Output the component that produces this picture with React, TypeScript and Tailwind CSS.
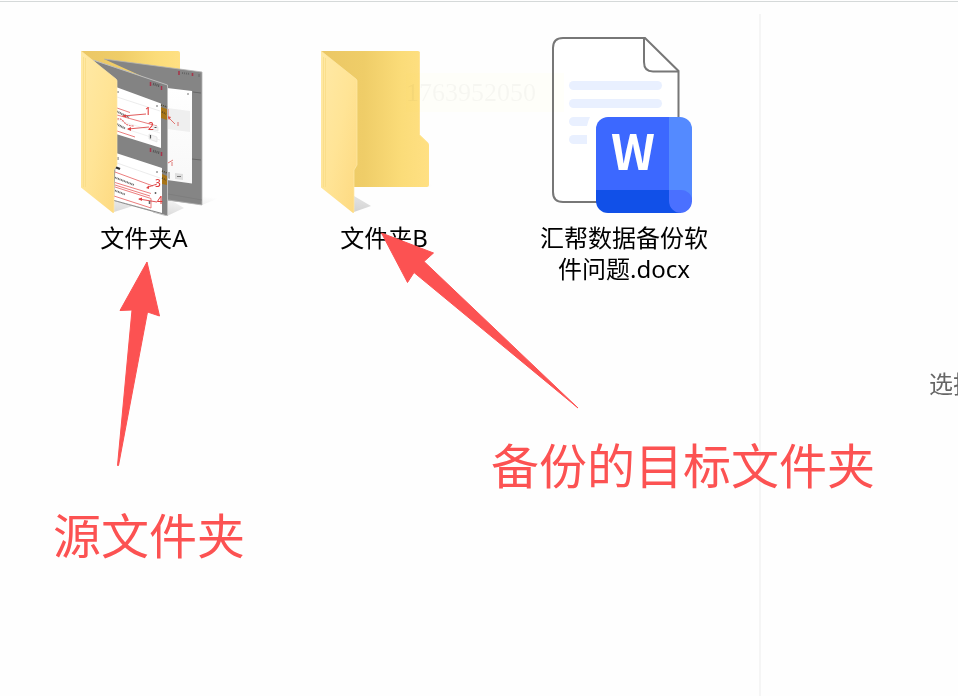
import type { ReactNode } from "react";

function FolderFront({ x }: { x: number }) {
  return (
    <g transform={`translate(${x} 0)`}>
      <path d="M1 51 L36 79 Q37 80 37 81 V165 L34 170 V212.5 L33 213 L1 187.5 Z" fill="url(#folder-front)" />
      <path d="M3.5 57 V187 M5.5 58 V187" stroke="#f9dc86" strokeWidth="0.8" fill="none" />
      <path d="M1 51 L36 79 Q37 80 37 81 V165 L34 170 V212" stroke="#ffeaa9" strokeWidth="0.7" fill="none" />
    </g>
  );
}

function FolderFilledIcon() {
  return (
    <svg viewBox="48 24 192 192" className="h-48 w-48" aria-hidden="true">
      <defs>
        <linearGradient id="folder-front" x1="0" y1="0" x2="1" y2="1">
          <stop offset="0" stopColor="#ffe9a6" />
          <stop offset="0.5" stopColor="#ffe496" />
          <stop offset="1" stopColor="#fdd980" />
        </linearGradient>
        <linearGradient id="folder-back" x1="0" y1="0" x2="1" y2="0">
          <stop offset="0" stopColor="#ebc765" />
          <stop offset="0.4" stopColor="#efcd68" />
          <stop offset="0.75" stopColor="#fbdc79" />
          <stop offset="1" stopColor="#ffe083" />
        </linearGradient>
        <linearGradient id="folder-shadow" x1="0" y1="1" x2="0.5" y2="0">
          <stop offset="0" stopColor="#d2d2d2" />
          <stop offset="1" stopColor="#fefefe" />
        </linearGradient>
        <linearGradient id="page-fade" x1="0" y1="0" x2="0" y2="1">
          <stop offset="0" stopColor="#ffffff" />
          <stop offset="1" stopColor="#f8f8f8" />
        </linearGradient>
      </defs>
      <path d="M81 51 H178 Q180 51 180 53 V90 H81 Z" fill="url(#folder-back)" />
      <path d="M167 216 V198 L184 208 Z M202 205 V192 L219 198 Z M114 212 V198 L133 206 Z" fill="url(#folder-shadow)" />

      {/* rear page */}
      <path d="M104 59 L202 72 V205 L150 198 V80 Z" fill="#858585" />
      <path d="M104 59 L202 72 V205 L168 200" fill="none" stroke="#b5b5b5" strokeWidth="0.8" />
      <path d="M167 88 L192 91 V183.5 L167 180 Z" fill="url(#page-fade)" />
      <path d="M167 108 L190 111 V132 L167 129 Z" fill="#efefef" />
      <path d="M175 173 L183 174 V180 L175 179 Z" fill="#dedede" />
      <path d="M177 176.5 H181 M188 93 V95" stroke="#777777" strokeWidth="1" />
      <path d="M167 172 H170 V179 L167 178 Z" fill="#b5b5b5" />
      <path d="M168 194 L202 200" stroke="#777777" strokeWidth="0.5" />
      <path d="M193 92 L201 93 M192 159 L201 160" stroke="#5f5f5f" strokeWidth="0.8" />
      <path d="M182 73 L190 74" stroke="#666666" strokeWidth="2" strokeDasharray="1 1" />
      <path d="M179 71 V75 M192.5 73 V76" stroke="#a5374a" strokeWidth="1.6" />
      <path d="M199 74 V77" stroke="#666666" />
      <path d="M168 117 L175 124 M168 109 V117 M168 163 L173 160" stroke="#dd5552" strokeWidth="0.8" />
      <path d="M167 116 L171 117 L169 120 Z" fill="#dd5552" />
      <path d="M178 122 V126 M172 162 V166" stroke="#d75c59" strokeWidth="0.8" />

      {/* facing page */}
      <path d="M93 60 L168 85 V216 L114 201 V80 Z" fill="#838383" />
      <path d="M93 60 L167.5 85 V216 L153 212" fill="none" stroke="#bebebe" strokeWidth="1" />
      <path d="M116 87 L161 103.5 V148 L116 134 Z M116 153 L162 168 V213 L114 200 Z" fill="#ffffff" />
      <path d="M161 107 L167 109 V120 L161 118 Z M162 174 L167 176 V185 L162 184 Z" fill="#a87518" />
      <path d="M161 105 L167 107 M162 171 L167 173 M162 112 L166 114 M162 178 L166 180" stroke="#4f4528" strokeWidth="1.4" strokeDasharray="1 1" />
      <path d="M153 84 L160 86 M153 151 L160 153" stroke="#555555" strokeWidth="2.4" strokeDasharray="1 0.8" />
      <path d="M150.5 82 V86 M161.5 86 V90 M150.5 148 V152 M161.5 152 V156" stroke="#a8334a" strokeWidth="1.5" />
      <path d="M118 91 V93 M118 157 V160 M157 105 V107 M157 171 V173" stroke="#555555" strokeWidth="0.9" />
      <path d="M117 97 L160 111 M117 163 L160 178" stroke="#e4e4e4" strokeWidth="0.7" />
      <path d="M117 120 L160 133 M117 126 L160 140" stroke="#e9e9e9" strokeWidth="0.7" />
      <path d="M117 111.5 L129 117.5 M117 124 L125 128.5" stroke="#666666" strokeWidth="2" strokeDasharray="1 0.6" />
      <path d="M117 108 L130 112.5 M117 131 L135 137 M117 115 L157 126" stroke="#e67070" strokeWidth="0.9" />
      <path d="M117 119 Q121 118 124 122 T134 126" stroke="#e67070" strokeWidth="1.2" strokeDasharray="2 0.8" fill="none" />
      <path d="M123 116 L146 114 M128 129 L149 127" stroke="#dd4748" strokeWidth="0.9" />
      <path d="M122 116 L126 114.5 V117.5 Z M127 129 L131 127 V131 Z" fill="#df4343" />
      <path d="M153 125 L158 127 V131 L153 129.5 Z M149 134 L157 137 V142 L149 139 Z" fill="#f4f4f4" stroke="#dddddd" strokeWidth="0.6" />
      <path d="M154.5 127.5 H156.5 M150.5 135 V138.5" stroke="#555555" strokeWidth="1.2" />
      <path d="M115 167 L120 169" stroke="#333333" strokeWidth="2.4" />
      <path d="M115 177.5 L134 185 M115 190.5 L125 194.5" stroke="#666666" strokeWidth="1.8" strokeDasharray="1 0.6" />
      <path d="M115 172 L153 186 M115 182.5 L151 193.5 M115 185 L150 196 M114 196 L151 208" stroke="#e65c5c" strokeWidth="0.8" />
      <path d="M115 187 L151 198.5 V208" stroke="#e65c5c" strokeWidth="0.8" fill="none" />
      <path d="M147 187.5 L157 184 M139 199 L157 202" stroke="#dc4245" strokeWidth="0.9" />
      <path d="M146 188 L149 185.5 V189 Z M138 199 L142 197.5 V201 Z" fill="#df4343" />
      <path d="M149.5 201 V204 M155.5 192 V194" stroke="#666666" strokeWidth="1.5" />
      <path d="M116 201 L153 211" stroke="#bbbbbb" strokeDasharray="2 1" strokeWidth="0.5" />
      <g fill="#e03c3c" className="font-['Noto_Sans',sans-serif] text-[10px] font-medium">
        <text x="145" y="115">1</text>
        <text x="148" y="130">2</text>
        <text x="155" y="187">3</text>
        <text x="157" y="204">4</text>
      </g>
      <FolderFront x={80} />
    </svg>
  );
}

function FolderEmptyIcon() {
  return (
    <svg viewBox="288 24 192 192" className="h-48 w-48" aria-hidden="true">
      <path d="M354 212 V196 L371 206 Z M429 187 V178 L443 181 Z" fill="url(#folder-shadow)" />
      <path
        d="M321 51 H418 Q420 51 420 53 V135 L428 142.5 Q429 143.5 429 145 V185 Q429 187 427 187 H354 Z"
        fill="url(#folder-back)"
      />
      <path d="M419.5 53 V135 L428 143" stroke="#ffe7a0" strokeWidth="0.7" fill="none" />
      <FolderFront x={320} />
    </svg>
  );
}

function WordFileIcon() {
  return (
    <svg viewBox="528 24 192 192" className="h-48 w-48" aria-hidden="true">
      <path
        d="M563 38 H645 L678.5 71 V192 Q678.5 202 668 202 H563 Q553 202 553 192 V48 Q553 38 563 38 Z"
        fill="#ffffff"
        stroke="#777777"
        strokeWidth="2"
      />
      <path d="M644 38 V62 Q644 71.5 653 71.5 H678" fill="none" stroke="#777777" strokeWidth="2" />
      <g fill="#e9f0ff">
        <rect x="569" y="81" width="93" height="9" rx="4.5" />
        <rect x="569" y="99" width="93" height="9" rx="4.5" />
        <path d="M573.5 117 H590 Q588 121 587 126 H573.5 A4.5 4.5 0 0 1 573.5 117 Z" />
        <path d="M573.5 135 H587 V144 H573.5 A4.5 4.5 0 0 1 573.5 135 Z" />
      </g>
      <clipPath id="word-badge">
        <rect x="596" y="117" width="96" height="96" rx="12" />
      </clipPath>
      <g clipPath="url(#word-badge)">
        <path d="M596 117 H669 V190 H596 Z" fill="#3c68ff" />
        <path d="M669 117 H692 V202 H669 Z" fill="#548aff" />
        <path d="M596 190 H681 V213 H596 Z" fill="#1150e8" />
        <path d="M669 190 H681 A11.5 11.5 0 0 1 681 213 A12 12 0 0 1 669 201 Z" fill="#4a70ff" />
      </g>
      <text x="633" y="170" textAnchor="middle" fill="#ffffff" className="font-['Noto_Sans_CJK_SC',sans-serif] text-[48px] font-bold">
        W
      </text>
    </svg>
  );
}

function FileItem({ icon, name }: { icon: ReactNode; name: string }) {
  return (
    <li className="flex w-60 flex-col items-center gap-1.5">
      {icon}
      <span className="w-44 text-center text-2xl leading-[31px] break-all text-black">{name}</span>
    </li>
  );
}

export default function App() {
  const files = [
    { name: "文件夹A", icon: <FolderFilledIcon /> },
    { name: "文件夹B", icon: <FolderEmptyIcon /> },
    { name: "汇帮数据备份软件问题.docx", icon: <WordFileIcon /> },
  ];

  return (
    <div className="relative flex min-h-screen flex-col overflow-hidden bg-[#fefefe] pt-px font-['Noto_Sans','Noto_Sans_CJK_SC',sans-serif]">
      <header className="h-px bg-[#d5d9d9]" />

      <div className="flex flex-1 pt-3">
        <main className="w-[759px] shrink-0 pt-[10px] pl-6">
          <ul className="flex">
            {files.map((file) => (
              <FileItem key={file.name} icon={file.icon} name={file.name} />
            ))}
          </ul>
        </main>
        <aside className="min-w-0 flex-1 overflow-hidden border-l-2 border-[#f5f5f5] pt-[354px] pl-[168px]">
          <p className="text-2xl leading-[31px] whitespace-nowrap text-[#666666]">选择</p>
        </aside>
      </div>

      {/* faint stamp over the file list */}
      <div className="absolute top-[73px] left-[406px] w-[158px] bg-[#fffffa] font-['Liberation_Serif',serif] text-[26px] leading-[39px] text-black/[0.03] mix-blend-multiply">
        1763952050
      </div>

      {/* arrows and their captions */}
      <svg viewBox="112 256 56 216" className="absolute top-[256px] left-[112px] h-[216px] w-14" aria-hidden="true">
        <path
          d="M147 262 L120 310.5 L132 310 L117.5 465.5 H118.5 L147.5 312 L159.5 316 Z"
          fill="#fc5252"
          stroke="#fc5252"
          strokeLinejoin="round"
        />
      </svg>
      <p className="absolute top-[500px] left-[53px] text-5xl leading-[72px] whitespace-nowrap text-[#fc5252]">源文件夹</p>

      <svg viewBox="376 228 208 184" className="absolute top-[228px] left-[376px] h-[184px] w-52" aria-hidden="true">
        <path
          d="M381.5 233 L433.5 253 L424 261.5 L578 408 L414 272.5 L407.5 282.5 Z"
          fill="#fc5252"
          stroke="#fc5252"
          strokeLinejoin="round"
        />
      </svg>
      <p className="absolute top-[430px] left-[491px] text-5xl leading-[72px] whitespace-nowrap text-[#fc5252]">
        备份的目标文件夹
      </p>
    </div>
  );
}
